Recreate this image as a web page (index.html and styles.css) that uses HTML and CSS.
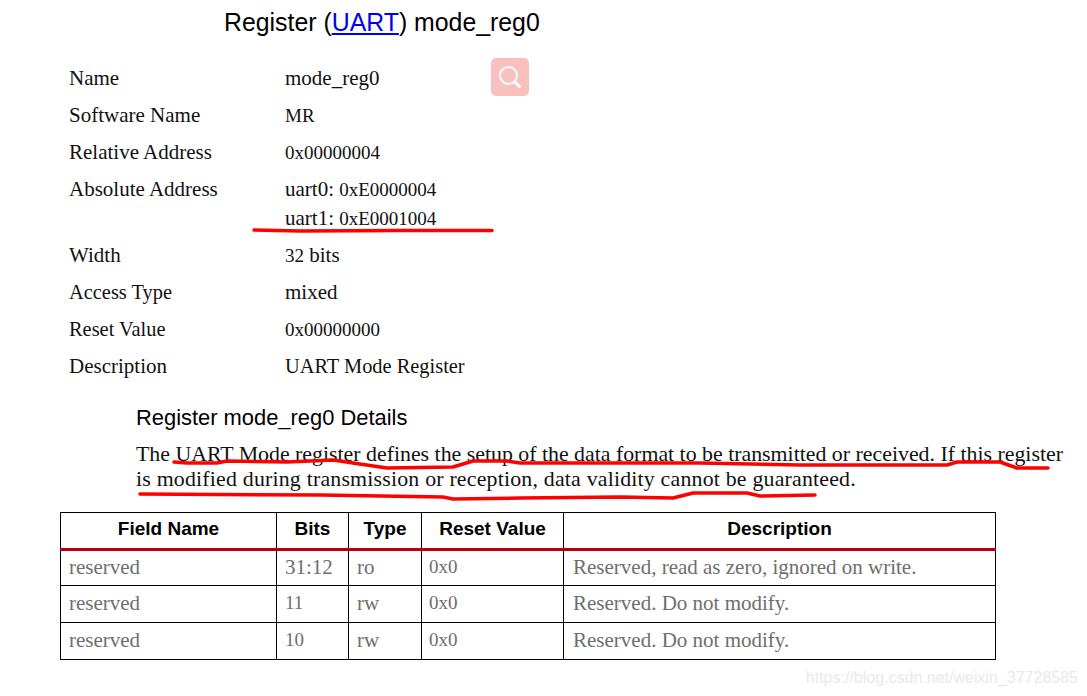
FILE: index.html
```
<!DOCTYPE html>
<html lang="en">
<head>
<meta charset="utf-8">
<title>Register (UART) mode_reg0</title>
<link rel="stylesheet" href="styles.css">
</head>
<body>
<main class="page">
  <h1 class="title">Register (<a href="#">UART</a>) mode_reg0</h1>
  <div class="info-wrap">
    <dl class="info">
      <dt>Name</dt><dd>mode_reg0</dd>
      <dt>Software Name</dt><dd class="num">MR</dd>
      <dt>Relative Address</dt><dd class="num">0x00000004</dd>
      <dt>Absolute Address</dt><dd>uart0: <span class="num">0xE0000004</span><br>uart1: <span class="num">0xE0001004</span></dd>
      <dt>Width</dt><dd><span class="num">32</span> bits</dd>
      <dt class="narrow">Access Type</dt><dd>mixed</dd>
      <dt class="narrow">Reset Value</dt><dd class="num">0x00000000</dd>
      <dt>Description</dt><dd class="narrow">UART Mode Register</dd>
    </dl>
    <div class="search-badge">
      <svg width="26" height="26" viewBox="0 0 26 26" fill="none" stroke="#fff">
        <circle cx="11.5" cy="11.5" r="8.5" stroke-width="1.8"/>
        <path d="M18 18 L22.5 22.5" stroke-width="3" stroke-linecap="round"/>
      </svg>
    </div>
  </div>
  <h2 class="details-title">Register mode_reg0 Details</h2>
  <p class="lead"><span class="lead-line">The UART Mode register defines the setup of the data format to be transmitted or received. If this register</span><span class="lead-line lead-line-wide">is modified during transmission or reception, data validity cannot be guaranteed.</span></p>
  <table class="fields">
    <colgroup>
      <col class="c1"><col class="c2"><col class="c3"><col class="c4"><col class="c5">
    </colgroup>
    <thead>
      <tr><th>Field Name</th><th>Bits</th><th>Type</th><th>Reset Value</th><th>Description</th></tr>
    </thead>
    <tbody>
      <tr class="first"><td>reserved</td><td>31:12</td><td>ro</td><td class="num">0x0</td><td>Reserved, read as zero, ignored on write.</td></tr>
      <tr><td>reserved</td><td class="num">11</td><td>rw</td><td class="num">0x0</td><td>Reserved. Do not modify.</td></tr>
      <tr><td>reserved</td><td class="num">10</td><td>rw</td><td class="num">0x0</td><td>Reserved. Do not modify.</td></tr>
    </tbody>
  </table>
</main>
<svg class="ink" width="1087" height="696" viewBox="0 0 1087 696" fill="none">
  <g stroke="#f00" stroke-width="3.5" stroke-linecap="round" stroke-linejoin="round">
    <path d="M254 230 L300 231 L400 230.5 L492 230.5"/>
    <path d="M174 462 L187 463 L217 463 L227 461 L287 462 L333 460 L353 463 L387 468 L453 467 L473 461 L507 461 L520 463 L620 463 L700 463 L800 465 L947 465 L957 462 L1000 462 L1017 468 L1048 468"/>
    <path d="M140 494 L320 495 L443 497 L453 499 L520 498 L620 497 L673 498 L693 493 L747 493 L760 496 L815 495"/>
  </g>
</svg>
<div class="watermark">https://blog.csdn.net/weixin_37728585</div>
</body>
</html>
```
FILE: styles.css
```
html, body { margin: 0; padding: 0; background: #fff; }
body {
  width: 1087px;
  height: 696px;
  overflow: hidden;
  position: relative;
  font-family: "Liberation Serif", serif;
  color: #111;
}
.page { padding: 0 0 0 60px; }
.title {
  margin: 0;
  padding: 8px 0 0 164px;
  font: 400 24.85px/30px "Liberation Sans", sans-serif;
  color: #000;
}
.title a { color: #00e; }
.info-wrap { position: relative; padding: 26px 0 0 9px; }
.info {
  margin: 0;
  display: grid;
  grid-template-columns: 216px 1fr;
  row-gap: 8px;
  font-size: 21px;
  line-height: 29px;
}
.info dt, .info dd { margin: 0; }
.num { font-size: 19px; }
.narrow { font-size: 20.4px; }
.search-badge {
  position: absolute;
  left: 431px;
  top: 20px;
  width: 38px;
  height: 38px;
  border-radius: 5px;
  background: #fabfbf;
  display: flex;
  align-items: center;
  justify-content: center;
}
.details-title {
  margin: 0;
  padding: 24px 0 0 76px;
  font: 400 21.9px/26px "Liberation Sans", sans-serif;
  color: #000;
}
.lead {
  margin: 0;
  padding: 11px 0 0 76px;
  font-size: 21.85px;
  line-height: 25px;
  white-space: nowrap;
}
.lead-line { display: block; }
.lead-line-wide { letter-spacing: 0.2px; }
.fields {
  margin-top: 20px;
  border-collapse: collapse;
  table-layout: fixed;
  width: 935px;
  font-size: 21px;
}
.c1 { width: 216px; }
.c2 { width: 72px; }
.c3 { width: 73px; }
.c4 { width: 142px; }
.c5 { width: 432px; }
.fields th, .fields td { border: 1px solid #000; }
.fields th {
  height: 37px;
  padding: 0 0 3px;
  box-sizing: border-box;
  font: 700 19px/22px "Liberation Sans", sans-serif;
  color: #000;
  border-bottom: 3px solid #b5000f;
}
.fields td {
  height: 37px;
  padding: 0 8px 2px;
  box-sizing: border-box;
  color: #6e6e6e;
}
.fields .first td { height: 36px; }
.fields td:nth-child(4) { padding-left: 7px; }
.fields td:last-child { padding-left: 9px; }
.fields td.num { font-size: 19px; }
.ink { position: absolute; left: 0; top: 0; pointer-events: none; }
.watermark {
  position: absolute;
  right: 9px;
  top: 668px;
  font: 16px/20px "Liberation Sans", sans-serif;
  color: #e9e9e9;
}
```
